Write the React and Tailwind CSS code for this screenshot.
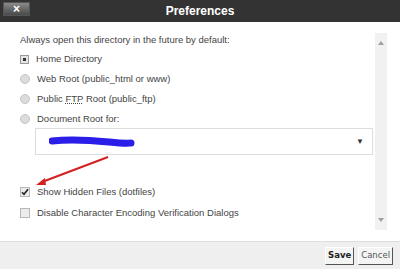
const Radio = ({ checked }) =>
  checked ? (
    <span className="w-[9px] h-[9px] border border-[#9a9a9a] bg-[#e4e4e4] flex items-center justify-center shrink-0">
      <span className="w-[3px] h-[3px] bg-[#333]" />
    </span>
  ) : (
    <span className="w-[10px] h-[10px] rounded-full border border-[#c4c4c4] bg-[#dcdcdc] shrink-0" />
  );

const Check = ({ checked }) => (
  <span className="w-[10px] h-[10px] border border-[#b8b8b8] bg-[#ececec] flex items-center justify-center shrink-0">
    {checked && (
      <svg width="8" height="8" viewBox="0 0 8 8">
        <path d="M1 4.2 L3 6.3 L7 1.2" stroke="#222" strokeWidth="1.6" fill="none" />
      </svg>
    )}
  </span>
);

export default function App() {
  return (
    <div
      className="relative w-[400px] h-[269px] flex flex-col bg-white text-[#444] text-[9.5px] overflow-hidden"
      style={{ fontFamily: '"Liberation Sans", Arial, sans-serif' }}
    >
      <div className="h-[22px] bg-[#333] flex items-center relative shrink-0">
        <button className="absolute left-[3px] top-[2px] w-[27px] h-[14px] bg-gradient-to-b from-[#8a8a8a] to-[#4a4a4a] border border-[#555] text-white text-[12px] font-bold leading-none flex items-center justify-center">
          ×
        </button>
        <div className="flex-1 text-center text-white font-bold text-[12px]">Preferences</div>
      </div>

      <div className="flex-1 flex">
        <div className="flex-1 pl-[20px] pt-[11px] pr-[2px]">
          <div className="h-[14px] leading-[14px]">Always open this directory in the future by default:</div>
          <div className="mt-[5px] flex flex-col gap-[6px]">
            <label className="flex items-center gap-[7px] h-[14px]">
              <Radio checked />
              <span>Home Directory</span>
            </label>
            <label className="flex items-center gap-[7px] h-[14px]">
              <Radio />
              <span>Web Root (public_html or www)</span>
            </label>
            <label className="flex items-center gap-[7px] h-[14px]">
              <Radio />
              <span>
                Public <abbr className="underline decoration-dotted">FTP</abbr> Root (public_ftp)
              </span>
            </label>
            <label className="flex items-center gap-[7px] h-[14px]">
              <Radio />
              <span>Document Root for:</span>
            </label>
          </div>
          <div className="ml-[15px] mt-[2px] h-[27px] border border-[#ddd] bg-white flex items-center pl-[13px] pr-[14px] justify-between">
            <svg width="90" height="14" viewBox="0 0 90 14">
              <path d="M3 6 C 20 4, 40 5, 60 7 S 78 8, 82 8" stroke="#2a1ee8" strokeWidth="7" strokeLinecap="round" fill="none" />
            </svg>
            <span className="text-[8px] text-[#333] -mr-[6px]">▼</span>
          </div>
          <div className="mt-[30px] flex flex-col gap-[7px]">
            <label className="flex items-center gap-[7px] h-[14px]">
              <Check checked />
              <span>Show Hidden Files (dotfiles)</span>
            </label>
            <label className="flex items-center gap-[7px] h-[14px]">
              <Check />
              <span>Disable Character Encoding Verification Dialogs</span>
            </label>
          </div>
        </div>
        <div className="w-[12px] mr-[13px] mt-[11px] mb-[11px] bg-[#f1f1f1] flex flex-col items-center justify-between py-[8px]">
          <svg width="6" height="4" viewBox="0 0 6 4"><path d="M0 4 L3 0 L6 4 Z" fill="#a0a0a0" /></svg>
          <svg width="6" height="4" viewBox="0 0 6 4"><path d="M0 0 L3 4 L6 0 Z" fill="#a0a0a0" /></svg>
        </div>
      </div>

      <div
        className="h-[28px] bg-[#efefef] border-t border-[#ddd] flex items-center justify-end gap-[4px] pr-[7px] shrink-0"
        style={{ fontFamily: '"DejaVu Sans", Verdana, sans-serif' }}
      >
        <button className="h-[18px] px-[2px] bg-[#f4f4f4] border border-t-[#fff] border-l-[#fff] border-r-[#555] border-b-[#555] text-[8.5px] font-bold text-[#222] leading-none">
          Save
        </button>
        <button className="h-[18px] px-[2px] bg-[#f4f4f4] border border-t-[#fff] border-l-[#fff] border-r-[#555] border-b-[#555] text-[8.5px] text-[#555] leading-none">
          Cancel
        </button>
      </div>

      <svg className="absolute left-0 top-0 pointer-events-none" width="400" height="269">
        <line x1="108" y1="157" x2="42" y2="182" stroke="#d42020" strokeWidth="2" />
        <path d="M36 185 L45 178 L46 185 Z" fill="#d42020" />
      </svg>
    </div>
  );
}
